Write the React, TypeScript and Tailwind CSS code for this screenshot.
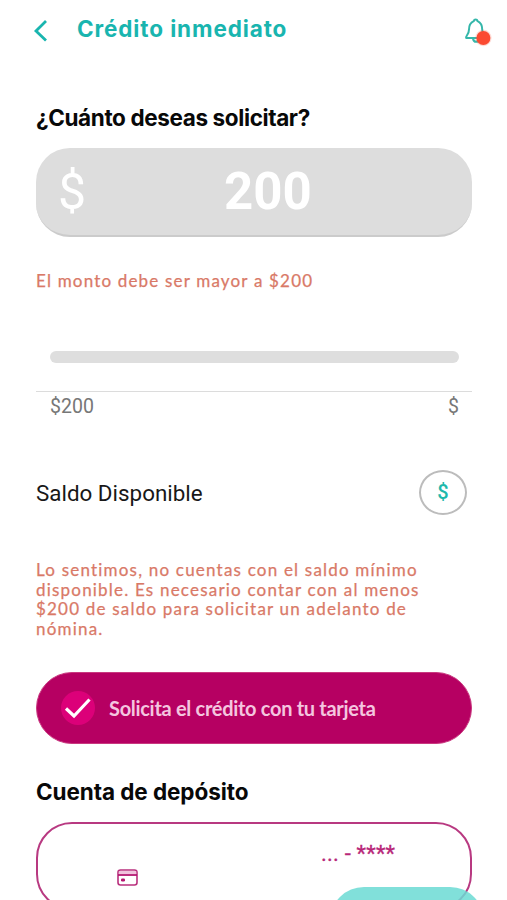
const heading = "font-['Inter',sans-serif] font-[650] whitespace-nowrap";

function Header() {
  return (
    <header className="flex h-[60px] items-start pl-[33px] pr-[14px]">
      <svg className="mt-[19px] h-6 w-[16px] shrink-0" viewBox="0 0 16 24" fill="none" stroke="#19b5af" strokeWidth="2.8">
        <path d="M13 2 3 12l10 9.500" />
      </svg>
      <h1 className={`${heading} ml-[28px] mt-[14px] text-[22.500px] leading-[30px] tracking-[0.88px] text-[#19b5af]`}>
        Crédito inmediato
      </h1>
      <svg className="ml-auto mt-[16px] h-[32px] w-[30px] shrink-0" viewBox="0 0 30 32" fill="none">
        <path
          d="M3.200 22C2.600 19.500 6 18.500 6 13.500 6 8.500 8 6.500 10.700 5.200c.5-2.200 3.400-2.200 3.900 0 2.800 1.300 4.600 3.800 4.600 8.300 0 4.500 2 6 2.500 8.500ZM10 22.500c.3 2.200 1.400 3.300 3.100 3.300s2.800-1.100 3.100-3.300"
          stroke="#35b7aa"
          strokeWidth="2"
          strokeLinejoin="round"
        />
        <circle cx="20.400" cy="22" r="8.200" fill="#fb4a31" fillOpacity="0.2" />
        <circle cx="20.400" cy="22" r="7" fill="#fb4a31" />
      </svg>
    </header>
  );
}

function AmountField() {
  return (
    <div className="mt-[15px] flex h-[89px] items-center rounded-[34px] border-b-2 border-[#cbcbcb] bg-[#dddddd] pl-[22px] text-white">
      <span className="w-[166px] text-[50px] leading-none">$</span>
      <span className="text-[51px] font-bold leading-none">200</span>
    </div>
  );
}

export default function App() {
  return (
    <div className="relative h-[900px] w-[507px] overflow-hidden bg-white font-['Roboto',sans-serif]">
      <Header />
      <main className="flex w-[472px] flex-col pl-[36px]">
        <h2 className={`${heading} mt-[43px] text-[22.500px] leading-[30px] tracking-[-0.38px] text-[#080808]`}>¿Cuánto deseas solicitar?</h2>
        <AmountField />
        <p className="mt-[34px] font-['Lato',sans-serif] text-[17px] leading-5 tracking-[1.18px] text-[#d97967] [-webkit-text-stroke:0.25px_#d97967]">
          El monto debe ser mayor a $200
        </p>
        <div className="ml-[14px] mr-[13px] mt-[60px] h-3 rounded-[6px] bg-[#dedede]" />
        <div className="mt-[28px] flex justify-between border-t border-[#dcdcdc] pl-[14px] pr-[13px] pt-[3px] text-[19.500px] leading-[23px] text-[#777777]">
          <span>$200</span>
          <span>$</span>
        </div>
        <div className="mt-[51px] flex h-[46px] items-center justify-between pr-[5px]">
          <span className="pt-[3px] text-[22.400px] text-[#181818]">Saldo Disponible</span>
          <span className="flex h-[45px] w-[48px] items-center justify-center rounded-[50%] border-2 border-[#bcbcbc] text-[20px] font-medium text-[#20b8ab]">
            $
          </span>
        </div>
        <p className="mt-[45px] whitespace-nowrap font-['Lato',sans-serif] text-[17px] leading-[19.700px] tracking-[1.2px] text-[#d97967] [-webkit-text-stroke:0.25px_#d97967]">
          Lo sentimos, no cuentas con el saldo mínimo
          <br />
          disponible. Es necesario contar con al menos
          <br />
          $200 de saldo para solicitar un adelanto de
          <br />
          nómina.
        </p>
        <button className="mt-[33px] flex h-[72px] items-center rounded-[36px] border border-[#c9387f] bg-[#b60062] pl-[24px]">
          <span className="flex h-[34px] w-[34px] items-center justify-center rounded-full bg-[#dc0079]">
            <svg width="30" height="24" viewBox="0 0 30 24" fill="none" stroke="#ffffff" strokeWidth="3.200">
              <path d="m3 12.500 8 7.500L26.500 3.500" />
            </svg>
          </span>
          <span className="ml-[14px] whitespace-nowrap font-['Lato',sans-serif] text-[20px] font-bold tracking-[-0.3px] text-[#f4c5df]">
            Solicita el crédito con tu tarjeta
          </span>
        </button>
        <h2 className={`${heading} mt-[33px] text-[22.500px] leading-[30px] tracking-[-0.08px] text-[#080808]`}>Cuenta de depósito</h2>
        <div className="mt-[15px] flex h-[88px] items-start rounded-[36px] border-2 border-[#b83981]">
          <svg className="ml-[79px] mt-[45px]" width="21" height="17" viewBox="0 0 21 17" fill="none">
            <rect x="1" y="1" width="19" height="15" rx="2.500" fill="#fff" stroke="#b9307d" strokeWidth="1.600" />
            <path d="M1.800 3.500h17.400" stroke="#f0c1dc" strokeWidth="3" />
            <path d="M1 6h19" stroke="#b51671" strokeWidth="1.800" />
            <rect x="4" y="9.500" width="4" height="3" rx="1.200" fill="#b51671" />
          </svg>
          <span className="ml-[183px] mt-[17px] whitespace-nowrap text-[22px] leading-[26px] tracking-[0.2px] text-[#b82779] [-webkit-text-stroke:0.3px_#b82779]">... - ****</span>
        </div>
      </main>
      <div className="absolute left-[330px] top-[887px] h-[68px] w-[154px] rounded-[34px] bg-[#6bdad3]/85" />
    </div>
  );
}
